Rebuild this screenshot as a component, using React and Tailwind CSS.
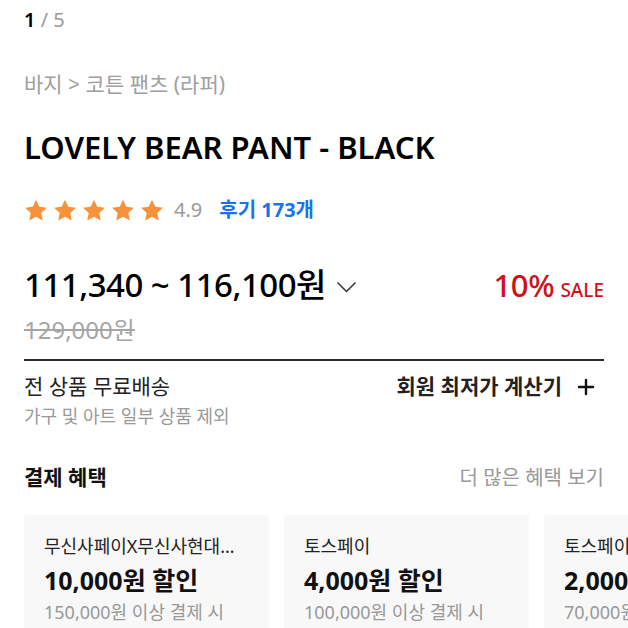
import { Plus } from "lucide-react"

const benefits = [
  { card: "무신사페이X무신사현대카드", amount: "10,000원 할인", cond: "150,000원 이상 결제 시" },
  { card: "토스페이", amount: "4,000원 할인", cond: "100,000원 이상 결제 시" },
  { card: "토스페이", amount: "2,000원 할인", cond: "70,000원 이상 결제 시" },
]

function Star() {
  return (
    <svg width="24" height="23" viewBox="0 0 24 23">
      <path
        d="M12 0.8l3.3 7 7.6 0.9-5.6 5.2 1.5 7.6L12 17.7l-6.8 3.8 1.5-7.6L1.1 8.7l7.6-0.9z"
        fill="#f7923a"
      />
    </svg>
  )
}

export default function App() {
  return (
    <div
      className="w-[628px] h-[628px] overflow-hidden bg-white text-[#111]"
      style={{ fontFamily: '"Noto Sans", "Noto Sans CJK KR", sans-serif' }}
    >
      <div className="px-6">

        <div className="pt-[6px] text-[20px] leading-[28px]">
          <span className="font-semibold text-black">1</span>
          <span className="text-[#999]"> / 5</span>
        </div>

        <div className="mt-[35px] text-[21px] leading-[30px] text-[#a0a0a0]">
          바지 &gt; 코튼 팬츠 (라퍼)
        </div>

        <h1 className="mt-[28px] text-[31px] leading-[40px] font-semibold text-black">
          LOVELY BEAR PANT - BLACK
        </h1>

        <div className="mt-[28px] flex items-center h-[30px]">
          <div className="flex gap-[5px]">
            <Star /><Star /><Star /><Star /><Star />
          </div>
          <span className="ml-[10px] text-[20px] text-[#9a9a9a]">4.9</span>
          <span className="ml-[17px] text-[20px] font-bold text-[#1a73e8]">후기 173개</span>
        </div>

        <div className="mt-[38px] flex items-center justify-between h-[44px]">
          <div className="flex items-center">
            <span className="text-[33px] leading-[44px] font-medium text-black tracking-[-0.5px]">
              111,340 ~ 116,100원
            </span>
            <svg className="ml-[10px] mt-[4px]" width="21" height="12" viewBox="0 0 21 12">
              <path d="M1.5 1.5l9 9 9-9" fill="none" stroke="#333" strokeWidth="1.5" />
            </svg>
          </div>
          <div className="flex items-baseline">
            <span className="text-[31px] font-medium text-[#d0111c] tracking-[-0.3px]">10%</span>
            <span className="ml-[6px] text-[19px] font-medium text-[#d0111c]">SALE</span>
          </div>
        </div>

        <div className="mt-[8px] text-[24px] leading-[30px] text-[#a6a6a6] line-through">
          129,000원
        </div>

        <div className="mt-[14px] h-[2px] bg-[#2a2a2a]" />

        <div className="mt-[11px] flex justify-between">
          <div>
            <div className="text-[21px] leading-[28px] text-[#222]">전 상품 무료배송</div>
            <div className="mt-[3px] text-[18px] leading-[26px] text-[#999]">가구 및 아트 일부 상품 제외</div>
          </div>
          <div className="flex items-start pr-[6px]">
            <span className="text-[21px] leading-[28px] font-bold text-[#222]">회원 최저가 계산기</span>
            <Plus className="ml-[12px] mt-[3px]" size={24} strokeWidth={2.4} color="#111" />
          </div>
        </div>

        <div className="mt-[34px] flex items-center justify-between h-[30px]">
          <span className="text-[21px] font-bold text-[#111]">결제 혜택</span>
          <span className="text-[20px] text-[#999]">더 많은 혜택 보기</span>
        </div>
      </div>

      <div className="mt-[22px] pl-6 flex gap-[15px]">
        {benefits.map((b, i) => (
          <div
            key={i}
            className="w-[245px] shrink-0 bg-[#f8f8f8] rounded-[3px] pl-[20px] pr-[30px] pt-[17px] pb-[16px]"
          >
            <div className="text-[18px] leading-[28px] text-[#222] truncate">{b.card}</div>
            <div className="mt-[3px] text-[25px] leading-[34px] font-bold text-[#111] whitespace-nowrap">{b.amount}</div>
            <div className="mt-[1px] text-[18px] leading-[28px] text-[#999] whitespace-nowrap">{b.cond}</div>
          </div>
        ))}
      </div>
    </div>
  )
}
